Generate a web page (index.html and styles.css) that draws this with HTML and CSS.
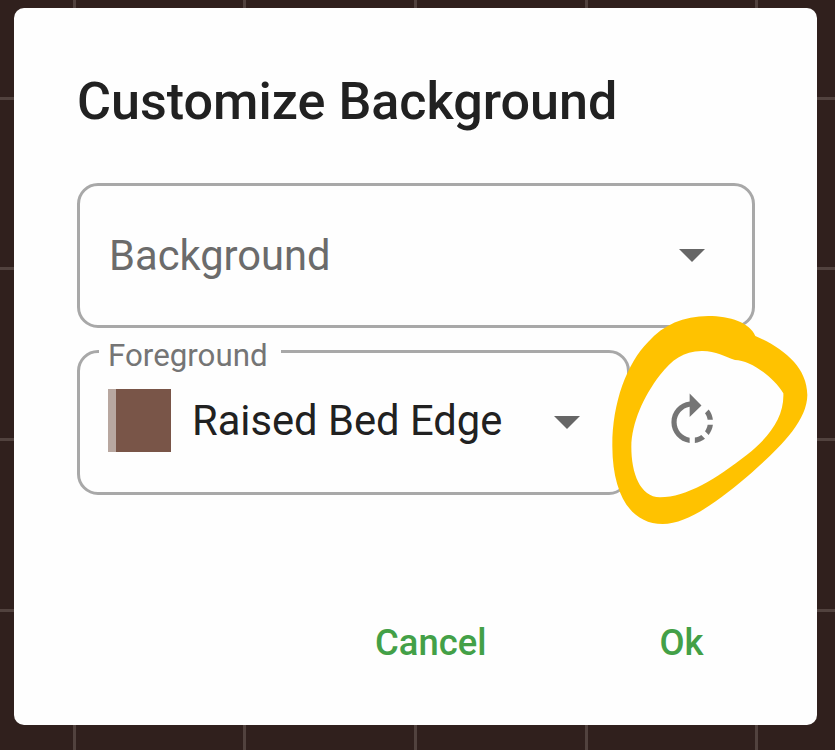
FILE: index.html
```html
<!DOCTYPE html>
<html lang="en">
<head>
<meta charset="utf-8">
<title>Customize Background</title>
<link rel="stylesheet" href="styles.css">
</head>
<body>
<main class="dialog">
  <h1 class="title">Customize Background</h1>
  <div class="field">
    <span class="placeholder">Background</span>
    <svg class="arrow" viewBox="0 0 26 13"><path d="M0 0h26L13 13z"/></svg>
  </div>
  <div class="row">
    <div class="field field-short">
      <span class="label">Foreground</span>
      <span class="swatch"></span>
      <span class="value">Raised Bed Edge</span>
      <svg class="arrow" viewBox="0 0 26 13"><path d="M0 0h26L13 13z"/></svg>
    </div>
    <button class="rotate" aria-label="Rotate">
      <svg viewBox="0 0 24 24"><path d="M15.55 5.55L11 1v3.07C7.06 4.56 4 7.92 4 12s3.05 7.44 7 7.93v-2.02c-2.84-.48-5-2.94-5-5.91s2.16-5.43 5-5.91V10l4.55-4.45zM19.93 11c-.17-1.39-.72-2.73-1.62-3.89l-1.42 1.42c.54.75.88 1.6 1.02 2.47h2.02zM13 17.9v2.02c1.39-.17 2.74-.71 3.9-1.61l-1.44-1.44c-.75.54-1.59.89-2.46 1.03zm3.89-2.42l1.42 1.41c.9-1.16 1.45-2.5 1.62-3.89h-2.02c-.14.87-.48 1.72-1.02 2.48z"/></svg>
    </button>
  </div>
  <div class="actions">
    <button class="action">Cancel</button>
    <button class="action">Ok</button>
  </div>
</main>
<svg class="marker" viewBox="0 0 705 720"><path fill-rule="evenodd" d="M325 48C390 48 450 68 466 108C550 145 621 200 622 285C622 370 520 460 455 518C370 590 270 672 188 672C90 672 38 580 37 440C36 310 80 190 145 125C190 75 250 48 325 48ZM305 153C345 152 375 170 405 180C450 180 520 230 550 280C553 350 510 410 440 465C350 535 260 592 180 592C120 590 94 520 94 440C95 370 130 290 180 225C215 180 250 153 305 153Z"/></svg>
</body>
</html>
```
FILE: styles.css
```css
* { box-sizing: border-box; }
body {
  margin: 0;
  height: 750px;
  padding: 8px 18px 25px 14px;
  overflow: hidden;
  position: relative;
  font-family: Roboto, sans-serif;
  background:
    repeating-linear-gradient(90deg, #51423e 0 3px, transparent 3px 170.7px) -98.2px 0 / 1100px 100%,
    repeating-linear-gradient(180deg, #51423e 0 3px, transparent 3px 170.7px) 0 -74px / 100% 1100px,
    #30201d;
}
.dialog {
  height: 717px;
  padding: 63px 62px 0 63px;
  background: #fefefe;
  border-radius: 10px;
}
.title {
  margin: 0 0 50px;
  font-size: 52.1px;
  line-height: 62px;
  font-weight: 500;
  color: #212121;
  white-space: nowrap;
}
.field {
  position: relative;
  display: flex;
  align-items: center;
  height: 145px;
  padding: 0 47px 0 29px;
  border: 3px solid #a8a8a8;
  border-radius: 21px;
  font-size: 41.7px;
  white-space: nowrap;
}
.row {
  display: flex;
  align-items: center;
  margin-top: 22px;
}
.field-short { width: 553px; }
.placeholder { color: #6b6b6b; }
.label {
  position: absolute;
  left: 19px;
  top: -15px;
  padding: 0 13px 0 9px;
  font-size: 31.3px;
  line-height: 36px;
  color: #757575;
  background: #fefefe;
}
.swatch {
  width: 63px;
  height: 63px;
  margin: -5px 21px 0 -1px;
  background: #795548;
  border-left: 8px solid #b8a7a0;
}
.value { color: #212121; margin-top: -5px; }
.arrow {
  width: 26px;
  height: 13px;
  margin-left: auto;
  fill: #666;
}
button {
  padding: 0;
  border: 0;
  background: none;
  font: inherit;
}
.rotate { margin-left: 31px; }
.rotate svg {
  display: block;
  width: 62.5px;
  height: 62.5px;
  fill: #757575;
}
.actions {
  display: flex;
  justify-content: flex-end;
  gap: 173px;
  margin: 126px 51.5px 0 0;
}
.action {
  font-size: 36.4px;
  line-height: 44px;
  font-weight: 500;
  color: #43a047;
}
.marker {
  position: absolute;
  left: 600px;
  top: 300px;
  width: 235px;
  height: 240px;
  fill: #ffc200;
  pointer-events: none;
}
```
